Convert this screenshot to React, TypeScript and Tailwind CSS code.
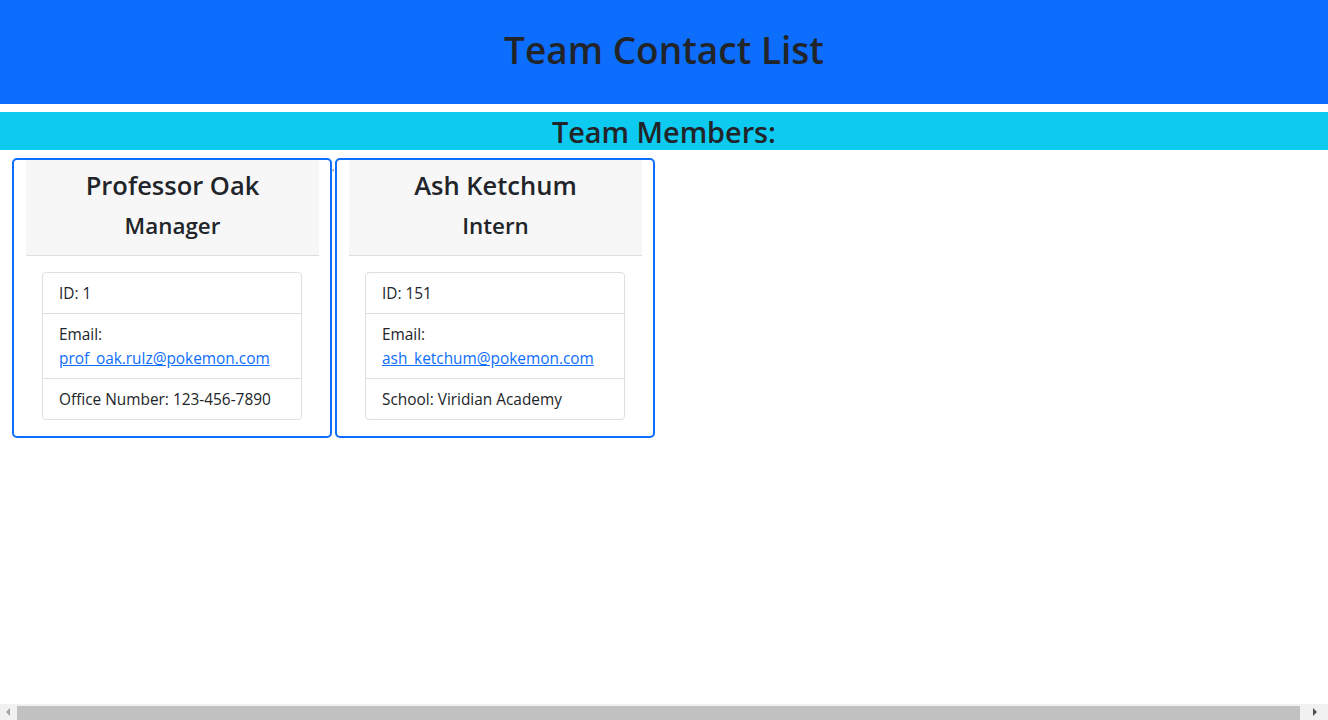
import React from 'react';

interface Member {
  name: string;
  role: string;
  id: number;
  email: string;
  extraLabel: string;
  extraValue: string;
}

const members: Member[] = [
  {
    name: 'Professor Oak',
    role: 'Manager',
    id: 1,
    email: 'prof_oak.rulz@pokemon.com',
    extraLabel: 'Office Number',
    extraValue: '123-456-7890'
  },
  {
    name: 'Ash Ketchum',
    role: 'Intern',
    id: 151,
    email: 'ash_ketchum@pokemon.com',
    extraLabel: 'School',
    extraValue: 'Viridian Academy'
  }
];

function MemberCard({ member }: { member: Member }) {
  return (
    <div className="w-[320px] border-2 border-[#0d6efd] rounded-[5px] bg-white">
      <div className="ml-[12px] mr-[11px]">
        <div className="bg-[#f7f7f7] border-b border-[#dedede] pt-[8px] pb-[15px] text-center">
          <h3 className="text-[25.5px] leading-[34px] font-semibold mb-[9px]">{member.name}</h3>
          <h4 className="text-[22.4px] leading-[29px] font-semibold">{member.role}</h4>
        </div>
        <div className="p-4 pr-[17px]">
          <ul className="border border-[#dfdfdf] rounded-[4px] text-[15.4px] leading-6">
            <li className="px-4 pt-[9px] pb-[7px] border-b border-[#dfdfdf]">ID: {member.id}</li>
            <li className="px-4 pt-[9px] pb-[7px] border-b border-[#dfdfdf]">
              Email:
              <br />
              <a href={`mailto:${member.email}`} className="text-[#0d6efd] underline">
                {member.email}
              </a>
            </li>
            <li className="px-4 pt-[9px] pb-[7px]">
              {member.extraLabel}: {member.extraValue}
            </li>
          </ul>
        </div>
      </div>
    </div>
  );
}

export default function App() {
  return (
    <div className="h-screen flex flex-col overflow-hidden bg-white text-[#212529] font-['Segoe_UI','Open_Sans',sans-serif]">
      <main className="flex-1">
        <header className="bg-[#0d6efd] h-[104px] pb-1 flex items-center justify-center">
          <h1 className="text-[37px] leading-[1.2] font-semibold">Team Contact List</h1>
        </header>

        <div className="mt-2 bg-[#0dcaf0] h-[38px] pt-[2px] flex items-center justify-center">
          <h2 className="text-[28.8px] leading-[1.2] font-semibold">Team Members:</h2>
        </div>

        <div className="flex items-start pl-3 pt-2">
          <MemberCard member={members[0]} />
          <span className="w-[3px] text-[10px] leading-none pt-[10px] text-[#555]">'</span>
          <MemberCard member={members[1]} />
        </div>
      </main>

      <div className="h-4 bg-[#f1f1f1] flex items-center">
        <div className="w-[17px] h-4 flex items-center justify-center">
          <svg width="5" height="8" viewBox="0 0 5 8">
            <path d="M4 0 L0 4 L4 8 Z" fill="#a3a3a3" />
          </svg>
        </div>
        <div className="w-[1283px] h-[14px] mt-[2px] bg-[#c1c1c1]" />
        <div className="flex-1 h-4 flex items-center justify-center">
          <svg width="5" height="8" viewBox="0 0 5 8">
            <path d="M1 0 L5 4 L1 8 Z" fill="#505050" />
          </svg>
        </div>
      </div>
    </div>
  );
}
